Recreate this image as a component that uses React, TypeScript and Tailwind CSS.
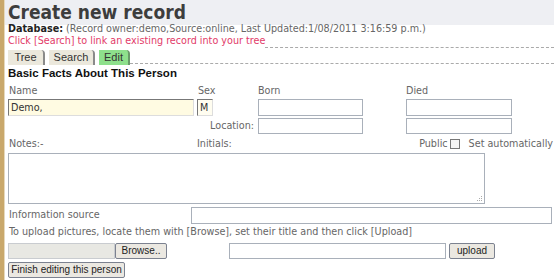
import React from 'react';

const body = "font-['DejaVu_Sans_Condensed','DejaVu_Sans',sans-serif]";
const arial = "font-['Liberation_Sans',Arial,sans-serif]";
const plainInput = 'h-[16px] border border-[#a9b0ba] bg-white';
const btn = `${arial} h-[16px] border border-[#7c8290] rounded-[2px] bg-[#ebe8e1] text-[10px] text-[#222] leading-[14px] px-0 whitespace-nowrap`;

export default function App() {
  return (
    <div className="flex w-[554px] h-[280px] bg-white overflow-hidden">
      <div className="w-[4px] bg-[#c9a86b]" />
      <div className="w-[1px] bg-[#e6d9bd]" />
      <div className={`flex-1 pl-[3px] ${body} text-[10.7px] text-[#666]`}>
        <h1 className="-ml-[3px] pl-[3px] h-[25px] pt-[1px] bg-[#eeeff3] text-[19px] leading-[22px] font-bold text-[#3d3d3d]">
          Create new record
        </h1>
        <div className="h-[10px] leading-[10px] -mt-[1px] whitespace-nowrap">
          <span className="font-bold text-[#222]">Database:</span> (Record owner:demo,Source:online, Last Updated:1/08/2011 3:16:59 p.m.)
        </div>
        <div className="flex h-[13px] mt-[1px]">
          <span className="text-[#e23a68] leading-[12px] whitespace-nowrap">Click [Search] to link an existing record into your tree</span>
          <div className="flex-1 border-b border-dashed border-[#aaa]" />
        </div>
        <div className={`flex items-end h-[17px] ${arial} text-[11px] text-[#333]`}>
          <div className="h-[15px] w-[37px] bg-[#ebe8dc] border-r-2 border-[#8a8a8a] rounded-tr-[4px] text-center leading-[15px]">Tree</div>
          <div className="h-[15px] w-[46px] ml-[4px] bg-[#ebe8dc] border-r-2 border-[#8a8a8a] rounded-tr-[4px] text-center leading-[15px]">Search</div>
          <div className="h-[15px] w-[31px] ml-[4px] bg-[#8ee08c] border-r-2 border-[#6a9a6a] rounded-tr-[4px] text-center leading-[15px]">Edit</div>
          <div className="flex-1 mb-[1px] border-b border-dashed border-[#aaa]" />
        </div>
        <div className={`${arial} font-bold text-[11.5px] text-[#111] leading-[14px] mt-[1px]`}>
          Basic Facts About This Person
        </div>

        <div className="flex mt-[5px] leading-[12px]">
          <div className="w-[189px] pl-[1px]">Name</div>
          <div className="w-[61px] pl-[1px]">Sex</div>
          <div className="w-[148px]">Born</div>
          <div>Died</div>
        </div>
        <div className="flex mt-[2px] h-[17px]">
          <div className="w-[189px]">
            <div className="w-[186px] h-[17px] bg-[#fffbe2] border-t border-l border-[#777] border-b border-r border-b-[#ddd] border-r-[#ddd] pl-[2px] text-[#333] leading-[15px]">Demo,</div>
          </div>
          <div className="w-[61px]">
            <div className="w-[16px] h-[17px] bg-[#fffdf0] border-t border-l border-[#777] border-b border-r border-b-[#ddd] border-r-[#ddd] pl-[2px] text-[#333] leading-[15px]">M</div>
          </div>
          <div className="w-[148px]"><div className={`w-[105px] ${plainInput} h-[17px]`} /></div>
          <div><div className={`w-[106px] ${plainInput} h-[17px]`} /></div>
        </div>
        <div className="flex mt-[2px] h-[16px]">
          <div className="w-[250px] text-right pr-[4px] leading-[16px]">Location:</div>
          <div className="w-[148px]"><div className={`w-[105px] ${plainInput}`} /></div>
          <div><div className={`w-[106px] ${plainInput}`} /></div>
        </div>

        <div className="flex items-center mt-[3px] h-[14px]">
          <div className="w-[189px] pl-[1px]">Notes:-</div>
          <div className="w-[100px]">Initials:</div>
          <div className="flex-1 flex items-center justify-end pr-[1px] whitespace-nowrap">
            <span>Public</span>
            <span className="ml-[2px] w-[10px] h-[10px] border border-[#777] bg-[#f4f4f4]" />
            <span className="ml-[9px]">Set automatically</span>
          </div>
        </div>
        <div className="relative mt-[2px] w-[477px] h-[51px] border border-[#a9b0ba] bg-white">
          <svg className="absolute right-[1px] bottom-[1px]" width="7" height="7" viewBox="0 0 7 7">
            <rect x="5" y="1" width="1" height="1" fill="#aaa" />
            <rect x="3" y="3" width="1" height="1" fill="#aaa" />
            <rect x="5" y="3" width="1" height="1" fill="#aaa" />
            <rect x="1" y="5" width="1" height="1" fill="#aaa" />
            <rect x="3" y="5" width="1" height="1" fill="#aaa" />
            <rect x="5" y="5" width="1" height="1" fill="#aaa" />
          </svg>
        </div>

        <div className="flex items-center mt-[3px] h-[17px]">
          <div className="w-[183px] pl-[1px]">Information source</div>
          <div className={`w-[361px] ${plainInput} h-[17px]`} />
        </div>
        <div className="pl-[1px] mt-[2px] h-[12px] leading-[12px] whitespace-nowrap">
          To upload pictures, locate them with [Browse], set their title and then click [Upload]
        </div>
        <div className="flex items-center mt-[5px] h-[16px]">
          <div className="w-[107px] h-[16px] bg-[#e8e8e3] border border-[#c9ccd0]" />
          <button className={`${btn} w-[52px]`}>Browse..</button>
          <div className={`w-[217px] ml-[62px] ${plainInput}`} />
          <button className={`${btn} w-[46px] ml-[3px]`}>upload</button>
        </div>
        <div className="mt-[3px]">
          <button className={`${btn} w-[117px]`}>Finish editing this person</button>
        </div>
      </div>
    </div>
  );
}
